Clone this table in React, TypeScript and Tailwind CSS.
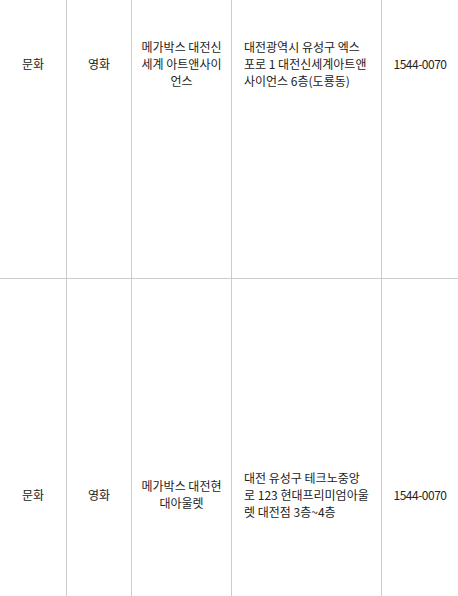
const rows = [
  {
    type: "문화",
    kind: "영화",
    name: "메가박스 대전신세계 아트앤사이언스",
    address: "대전광역시 유성구 엑스포로 1 대전신세계아트앤사이언스 6층(도룡동)",
    tel: "1544-0070",
  },
  {
    type: "문화",
    kind: "영화",
    name: "메가박스 대전현대아울렛",
    address: "대전 유성구 테크노중앙로 123 현대프리미엄아울렛 대전점 3층~4층",
    tel: "1544-0070",
  },
];

export default function App() {
  return (
    <div className="h-[596px] w-[458px] overflow-hidden bg-white font-['Noto_Sans_CJK_KR','Malgun_Gothic',sans-serif] text-[12px] leading-[17px] text-[#222]">
      <div className="-mt-[152px] flex flex-col">
        {rows.map((row, i) => (
          <div key={i} className="flex h-[431px] border-b border-[#ccc]">
            <div className="flex w-[67px] shrink-0 items-center justify-center border-r border-[#ccc]">
              {row.type}
            </div>
            <div className="flex w-[65px] shrink-0 items-center justify-center border-r border-[#ccc]">
              {row.kind}
            </div>
            <div className="flex w-[100px] shrink-0 items-center justify-center border-r border-[#ccc] px-2 text-center">
              {row.name}
            </div>
            <div className="flex w-[150px] shrink-0 items-center border-r border-[#ccc] pl-3 pr-[11px]">
              {row.address}
            </div>
            <div className="flex flex-1 items-center justify-center tracking-[-0.5px]">{row.tel}</div>
          </div>
        ))}
      </div>
    </div>
  );
}
